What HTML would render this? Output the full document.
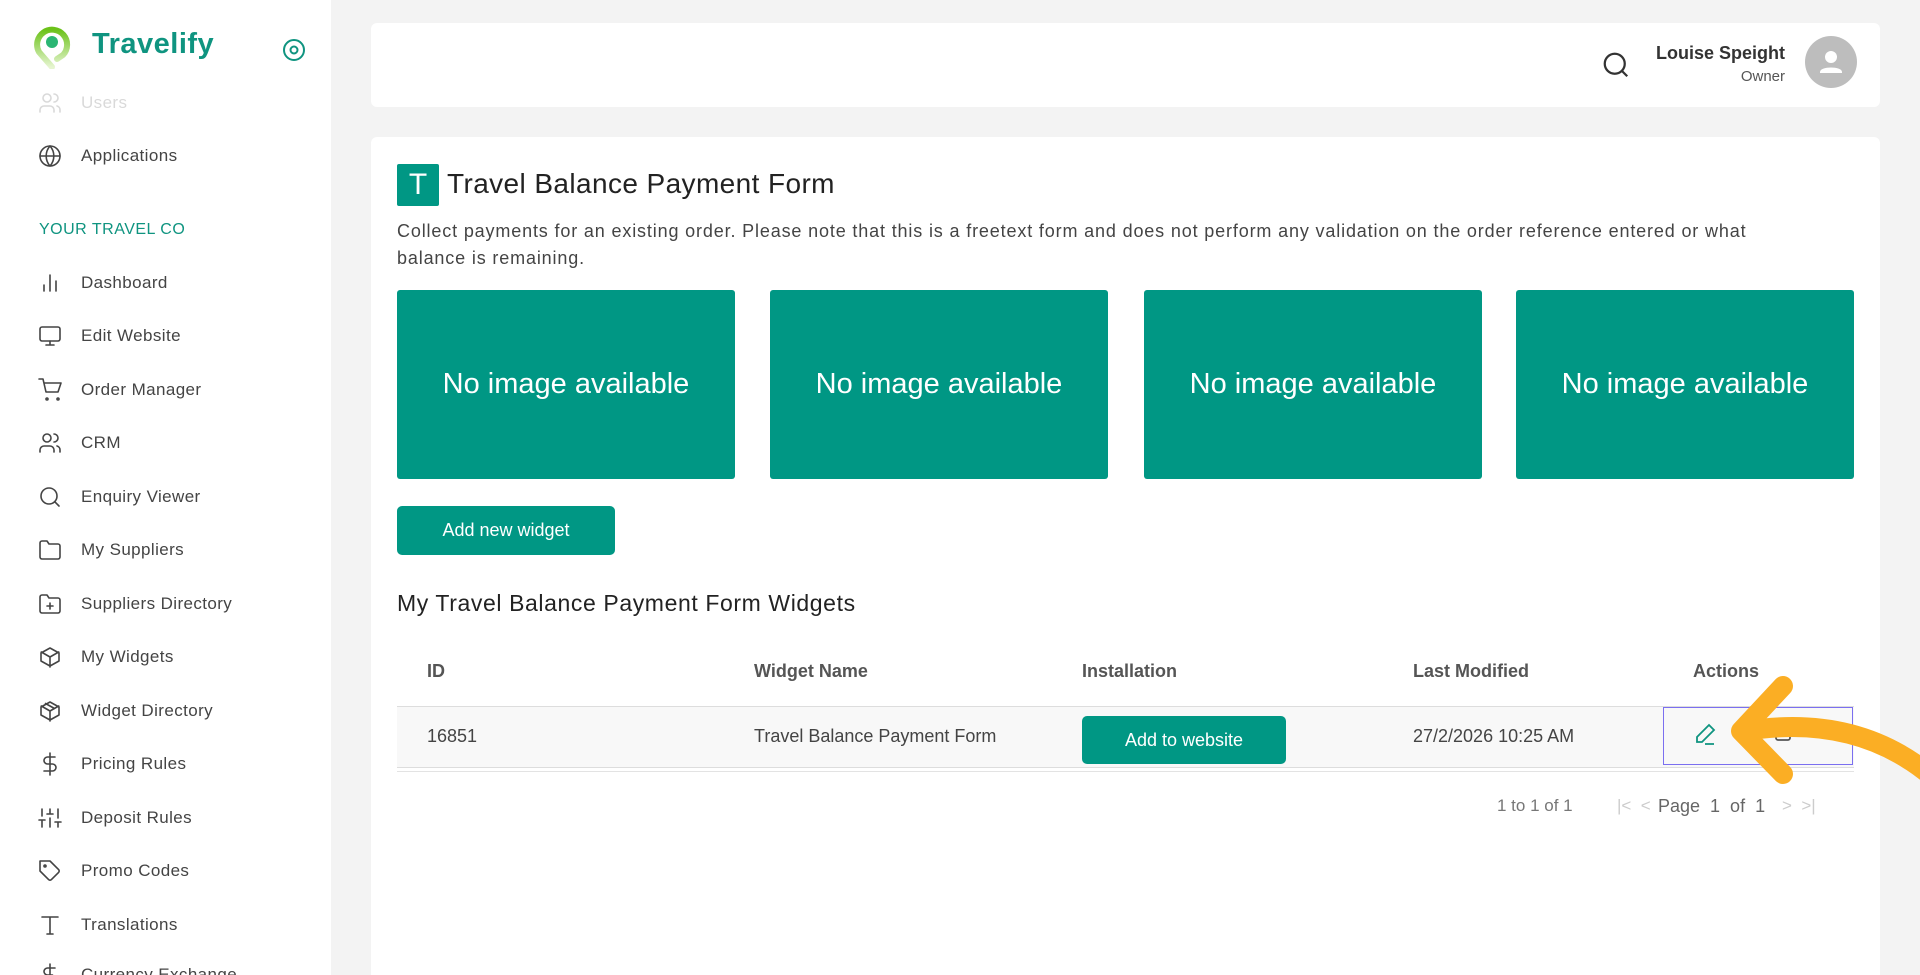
<!DOCTYPE html>
<html><head><meta charset="utf-8"><style>
*{box-sizing:border-box;margin:0;padding:0}
html,body{width:1920px;height:975px;overflow:hidden}
body{background:#f3f3f3;font-family:"Liberation Sans",sans-serif;color:#333}
#w{position:relative;width:1920px;height:975px;overflow:hidden}
.side{position:absolute;left:0;top:0;width:331px;height:975px;background:#fff;overflow:hidden}
.logo{position:absolute;left:92px;top:28px;font-size:29px;font-weight:bold;color:#0f9480;letter-spacing:.5px}
.item{position:absolute;left:38px;font-size:17px;color:#444;height:24px;width:290px}
.item svg{position:absolute;left:0;top:0;width:24px;height:24px;fill:none;stroke:#444;stroke-width:1.6;stroke-linecap:round;stroke-linejoin:round}
.item span{position:absolute;left:43px;top:2px;white-space:nowrap;letter-spacing:.4px}
.sec{position:absolute;left:39px;top:221px;font-size:16px;color:#0f9480;letter-spacing:.5px}
.hdr{position:absolute;left:371px;top:23px;width:1509px;height:84px;background:#fff;border-radius:6px}
.card{position:absolute;left:371px;top:137px;width:1509px;height:838px;background:#fff;border-radius:6px 6px 0 0}
.tile{position:absolute;top:290px;height:189px;width:338px;background:#009784;border-radius:3px;color:#fff;font-size:29px;font-weight:300;display:flex;align-items:center;justify-content:center}
.btn{position:absolute;background:#009784;color:#fff;border-radius:5px;display:flex;align-items:center;justify-content:center;font-size:18px}
.th{position:absolute;top:661px;font-size:18px;font-weight:bold;color:#555}
.td{position:absolute;top:726px;font-size:18px;color:#444}
</style></head><body><div id="w">
<div class="side">
<svg style="position:absolute;left:33px;top:25px" width="38" height="44" viewBox="0 0 38 44"><defs><linearGradient id="g" x1="0" y1="0" x2="0" y2="1"><stop offset="0" stop-color="#6cc21a"/><stop offset="1" stop-color="#e6f5d0"/></linearGradient></defs><path d="M19 42 L6 27 A15 15 0 1 1 30 30 L24 34" fill="none" stroke="url(#g)" stroke-width="6" stroke-linecap="round"/><circle cx="19" cy="17" r="6" fill="#2bb673"/></svg>
<div class="logo">Travelify</div>
<svg style="position:absolute;left:282px;top:38px" width="24" height="24" viewBox="0 0 24 24"><circle cx="12" cy="12" r="10" fill="none" stroke="#0f9480" stroke-width="2"/><circle cx="12" cy="12" r="3.5" fill="none" stroke="#0f9480" stroke-width="2"/></svg>
<div class="item" style="top:91px;opacity:.2"><svg viewBox="0 0 24 24"><circle cx="9" cy="7" r="4"/><path d="M2 21v-2a4 4 0 0 1 4-4h6a4 4 0 0 1 4 4v2M16 3a4 4 0 0 1 0 8M22 21v-2a4 4 0 0 0-3-4"/></svg><span>Users</span></div>
<div class="item" style="top:144px"><svg viewBox="0 0 24 24"><circle cx="12" cy="12" r="10"/><path d="M2 12h20M12 2a15 15 0 0 1 0 20a15 15 0 0 1 0-20"/></svg><span>Applications</span></div>
<div class="sec">YOUR TRAVEL CO</div>
<div class="item" style="top:271px"><svg viewBox="0 0 24 24"><path d="M6 20v-6M12 20V4M18 20v-10"/></svg><span>Dashboard</span></div>
<div class="item" style="top:324px"><svg viewBox="0 0 24 24"><rect x="2" y="3" width="20" height="14" rx="2"/><path d="M8 21h8M12 17v4"/></svg><span>Edit Website</span></div>
<div class="item" style="top:378px"><svg viewBox="0 0 24 24"><circle cx="9" cy="21" r="1"/><circle cx="20" cy="21" r="1"/><path d="M1 1h4l3 13h12l3-9H6"/></svg><span>Order Manager</span></div>
<div class="item" style="top:431px"><svg viewBox="0 0 24 24"><circle cx="9" cy="7" r="4"/><path d="M2 21v-2a4 4 0 0 1 4-4h6a4 4 0 0 1 4 4v2M16 3a4 4 0 0 1 0 8M22 21v-2a4 4 0 0 0-3-4"/></svg><span>CRM</span></div>
<div class="item" style="top:485px"><svg viewBox="0 0 24 24"><circle cx="11" cy="11" r="8"/><path d="M21 21l-4.3-4.3"/></svg><span>Enquiry Viewer</span></div>
<div class="item" style="top:538px"><svg viewBox="0 0 24 24"><path d="M22 19a2 2 0 0 1-2 2H4a2 2 0 0 1-2-2V5a2 2 0 0 1 2-2h5l2 3h9a2 2 0 0 1 2 2z"/></svg><span>My Suppliers</span></div>
<div class="item" style="top:592px"><svg viewBox="0 0 24 24"><path d="M22 19a2 2 0 0 1-2 2H4a2 2 0 0 1-2-2V5a2 2 0 0 1 2-2h5l2 3h9a2 2 0 0 1 2 2zM12 11v6M9 14h6"/></svg><span>Suppliers Directory</span></div>
<div class="item" style="top:645px"><svg viewBox="0 0 24 24"><path d="M21 16V8l-9-5-9 5v8l9 5 9-5zM3.3 7L12 12l8.7-5M12 22V12"/></svg><span>My Widgets</span></div>
<div class="item" style="top:699px"><svg viewBox="0 0 24 24"><path d="M21 16V8l-9-5-9 5v8l9 5 9-5zM3.3 7L12 12l8.7-5M12 22V12M7.5 4.5l9 5"/></svg><span>Widget Directory</span></div>
<div class="item" style="top:752px"><svg viewBox="0 0 24 24"><path d="M12 1v22M17 5H9.5a3.5 3.5 0 0 0 0 7h5a3.5 3.5 0 0 1 0 7H6"/></svg><span>Pricing Rules</span></div>
<div class="item" style="top:806px"><svg viewBox="0 0 24 24"><path d="M4 21v-7M4 10V3M12 21v-9M12 8V3M20 21v-5M20 12V3M1 14h6M9 8h6M17 16h6"/></svg><span>Deposit Rules</span></div>
<div class="item" style="top:859px"><svg viewBox="0 0 24 24"><path d="M20.6 13.4l-7.2 7.2a2 2 0 0 1-2.8 0L2 12V2h10l8.6 8.6a2 2 0 0 1 0 2.8z"/><circle cx="7" cy="7" r="1"/></svg><span>Promo Codes</span></div>
<div class="item" style="top:913px"><svg viewBox="0 0 24 24"><path d="M4 4h16M12 4v17M9 21h6"/></svg><span>Translations</span></div>
<div class="item" style="top:963px"><svg viewBox="0 0 24 24"><path d="M12 1v22M17 5H9.5a3.5 3.5 0 0 0 0 7h5"/></svg><span>Currency Exchange</span></div>
</div>
<div class="hdr">
<svg style="position:absolute;left:1230px;top:27px" width="30" height="30" viewBox="0 0 24 24" fill="none" stroke="#333" stroke-width="1.8"><circle cx="11" cy="11" r="8"/><path d="M21 21l-4.3-4.3"/></svg>
<div style="position:absolute;right:95px;top:20px;font-size:18px;font-weight:bold;color:#333">Louise Speight</div>
<div style="position:absolute;right:95px;top:45px;font-size:15px;color:#555">Owner</div>
<div style="position:absolute;left:1434px;top:13px;width:52px;height:52px;border-radius:50%;background:#bdbdbd"><svg width="52" height="52" viewBox="0 0 52 52"><circle cx="26" cy="21" r="6" fill="#fff"/><path d="M15 36c0-6 22-6 22 0v1H15z" fill="#fff"/></svg></div>
</div>
<div class="card"></div>
<div style="position:absolute;left:397px;top:164px;width:42px;height:42px;background:#009784;color:#fff;font-size:30px;font-weight:300;display:flex;align-items:center;justify-content:center;border-radius:2px">T</div>
<div style="position:absolute;left:447px;top:168px;font-size:28px;color:#222;letter-spacing:.4px">Travel Balance Payment Form</div>
<div style="position:absolute;left:397px;top:218px;width:1420px;font-size:18px;color:#444;line-height:27px;letter-spacing:.85px">Collect payments for an existing order. Please note that this is a freetext form and does not perform any validation on the order reference entered or what balance is remaining.</div>
<div class="tile" style="left:397px">No image available</div>
<div class="tile" style="left:770px">No image available</div>
<div class="tile" style="left:1144px">No image available</div>
<div class="tile" style="left:1516px">No image available</div>
<div class="btn" style="left:397px;top:506px;width:218px;height:49px">Add new widget</div>
<div style="position:absolute;left:397px;top:590px;font-size:23px;color:#222;letter-spacing:.6px">My Travel Balance Payment Form Widgets</div>
<div class="th" style="left:427px">ID</div><div class="th" style="left:754px">Widget Name</div><div class="th" style="left:1082px">Installation</div><div class="th" style="left:1413px">Last Modified</div><div class="th" style="left:1693px">Actions</div>
<div style="position:absolute;left:397px;top:706px;width:1457px;height:62px;background:#f8f8f8;border-top:1px solid #ddd;border-bottom:1px solid #ddd"></div>
<div style="position:absolute;left:397px;top:771px;width:1457px;border-top:1px solid #e3e3e3"></div>
<div class="td" style="left:427px">16851</div><div class="td" style="left:754px">Travel Balance Payment Form</div>
<div class="btn" style="left:1082px;top:716px;width:204px;height:48px">Add to website</div>
<div class="td" style="left:1413px">27/2/2026 10:25 AM</div>
<div style="position:absolute;left:1663px;top:707px;width:190px;height:58px;border:1.5px solid #7b6ff0"></div>
<svg style="position:absolute;left:1693px;top:722px" width="24" height="24" viewBox="0 0 24 24" fill="none" stroke="#0f9480" stroke-width="1.8"><path d="M16 3l5 5L9 20H4v-5zM12 22h9"/></svg>
<svg style="position:absolute;left:1774px;top:724px" width="18" height="18" viewBox="0 0 18 18" fill="none" stroke="#555" stroke-width="1.8"><rect x="2" y="2" width="14" height="14" rx="2"/></svg>
<div style="position:absolute;left:1497px;top:796px;font-size:17px;color:#777">1 to 1 of 1</div>
<div style="position:absolute;left:1617px;top:796px;font-size:17px;color:#ccc">|&lt; &nbsp;&lt;</div>
<div style="position:absolute;left:1658px;top:796px;font-size:18px;color:#666">Page &nbsp;1 &nbsp;of &nbsp;1</div>
<div style="position:absolute;left:1782px;top:796px;font-size:17px;color:#ccc">&gt; &nbsp;&gt;|</div>
<svg style="position:absolute;left:0;top:0" width="1920" height="975"><g fill="none" stroke="#fbae24" stroke-width="20" stroke-linecap="round" stroke-linejoin="round"><path d="M1783 686L1741 731L1783 774"/><path d="M1745 731C1825 718 1885 738 1930 775"/></g></svg>
</div></body></html>
